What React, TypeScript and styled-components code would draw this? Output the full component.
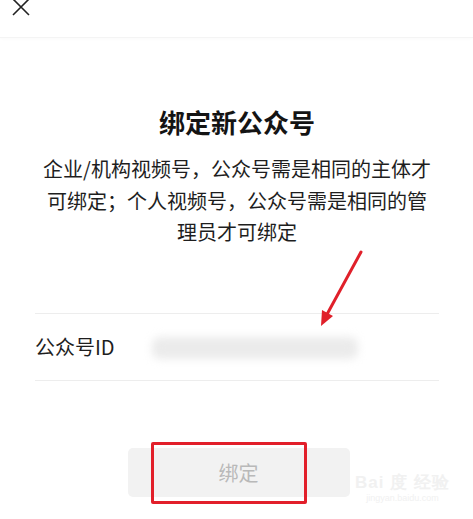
import * as React from 'react';
import styled, { createGlobalStyle } from 'styled-components';

const GlobalStyle = createGlobalStyle`
  html, body {
    margin: 0;
    padding: 0;
    background: #ffffff;
  }
  body {
    font-family: 'Noto Sans CJK SC', 'Noto Sans', sans-serif;
    color: #1b1b1b;
    overflow: hidden;
  }
`;

const Page = styled.div`
  position: relative;
  width: 473px;
  height: 519px;
  overflow: hidden;
  background: #fff;
`;

const Header = styled.div`
  height: 37px;
  display: flex;
  align-items: flex-start;
  padding-left: 12px;
  border-bottom: 1px solid #f4f4f4;
  box-shadow: 0 1px 3px rgba(0, 0, 0, 0.025);
`;

const CloseIcon = styled.svg`
  margin-top: -2px;
  width: 18px;
  height: 18px;
`;

const Body = styled.div`
  padding: 0 34px 0 35px;
  display: flex;
  flex-direction: column;
`;

const Title = styled.h1`
  margin: 66px 0 0;
  font-size: 26px;
  line-height: 36px;
  font-weight: 700;
  text-align: center;
  color: #141414;
`;

const Desc = styled.p`
  margin: 13px 0 0;
  font-size: 20px;
  line-height: 31.5px;
  text-align: center;
  color: #1e1e1e;
`;

const Field = styled.div`
  margin-top: 65px;
  height: 66px;
  display: flex;
  align-items: center;
  border-top: 1px solid #ededed;
  border-bottom: 1px solid #ededed;
`;

const Label = styled.span`
  font-size: 20px;
  width: 117px;
  flex-shrink: 0;
  color: #1e1e1e;
`;

const Blurred = styled.div`
  width: 206px;
  height: 22px;
  margin-top: 2px;
  background: #ebebeb;
  border-radius: 8px;
  filter: blur(4px);
`;

const ButtonArea = styled.div`
  position: relative;
  margin-top: 67px;
  display: flex;
  justify-content: center;
  padding-left: 3px;
`;

const BindButton = styled.div`
  width: 222px;
  height: 49px;
  border-radius: 5px;
  background: #f2f2f2;
  display: flex;
  align-items: center;
  justify-content: center;
  font-size: 20px;
  color: #b9b9b9;
`;

const Highlight = styled.div`
  position: absolute;
  left: 116px;
  top: -6px;
  width: 150px;
  height: 56px;
  border: 3px solid #e21f2a;
  border-radius: 2px;
`;

const Arrow = styled.svg`
  position: absolute;
  left: 310px;
  top: 245px;
  width: 60px;
  height: 90px;
`;

const Watermark = styled.div`
  position: absolute;
  left: 355px;
  top: 474px;
  display: flex;
  flex-direction: column;
  align-items: center;
  color: #f1f1f1;
  font-family: 'Liberation Sans', sans-serif;
`;

const MarkTop = styled.div`
  font-size: 17px;
  font-weight: 700;
  letter-spacing: 1px;
  line-height: 18px;
`;

const MarkBottom = styled.div`
  font-size: 9px;
  line-height: 12px;
`;

const App: React.FC = () => {
  return (
    <Page>
      <GlobalStyle />
      <Header>
        <CloseIcon viewBox="0 0 18 18">
          <path d="M1 1 L17 17 M17 1 L1 17" stroke="#222" strokeWidth="1.6" fill="none" />
        </CloseIcon>
      </Header>
      <Body>
        <Title>绑定新公众号</Title>
        <Desc>
          企业/机构视频号，公众号需是相同的主体才
          <br />
          可绑定；个人视频号，公众号需是相同的管
          <br />
          理员才可绑定
        </Desc>
        <Field>
          <Label>公众号ID</Label>
          <Blurred />
        </Field>
        <ButtonArea>
          <BindButton>绑定</BindButton>
          <Highlight />
        </ButtonArea>
      </Body>
      <Arrow viewBox="0 0 60 90">
        <path d="M51 7 L15 73" stroke="#e0202a" strokeWidth="3" fill="none" strokeLinecap="round" />
        <path d="M11 81 L12 65 L23 71 Z" fill="#e0202a" />
      </Arrow>
      <Watermark>
        <MarkTop>Bai 度 经验</MarkTop>
        <MarkBottom>jingyan.baidu.com</MarkBottom>
      </Watermark>
    </Page>
  );
};

export default App;
